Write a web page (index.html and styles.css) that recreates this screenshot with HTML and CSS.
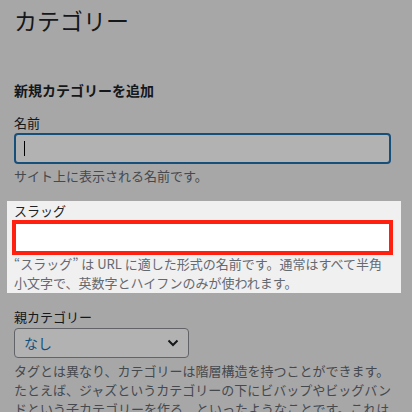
FILE: index.html
```html
<!DOCTYPE html>
<html lang="ja">
<head>
  <meta charset="UTF-8" />
  <meta name="viewport" content="width=device-width, initial-scale=1.0"/>
  <title>カテゴリー</title>
  <link rel="stylesheet" href="styles.css">
</head>
<body>
  <div class="wrap">
    <h1>カテゴリー</h1>

    <h2>新規カテゴリーを追加</h2>

    <div class="form-field">
      <label>名前</label>
      <div class="text-input is-focused"><span class="caret"></span></div>
      <p class="description">サイト上に表示される名前です。</p>
    </div>

    <div class="form-field is-highlighted">
      <label>スラッグ</label>
      <div class="text-input is-marked"></div>
      <p class="description">“スラッグ” は URL に適した形式の名前です。通常はすべて半角小文字で、英数字とハイフンのみが使われます。</p>
    </div>

    <div class="form-field">
      <label>親カテゴリー</label>
      <div class="select">
        <span>なし</span>
        <svg width="12" height="8" viewBox="0 0 12 8"><path d="M1.5 1.5 L6 6 L10.5 1.5" fill="none" stroke="#1d2327" stroke-width="2"/></svg>
      </div>
      <p class="description">タグとは異なり、カテゴリーは階層構造を持つことができます。たとえば、ジャズというカテゴリーの下にビバップやビッグバンドという子カテゴリーを作る、といったようなことです。これは完全に任意です。</p>
    </div>
  </div>

  <div class="overlay"></div>
</body>
</html>
```

FILE: styles.css
```css
:root {
  --bg: #f0f0f1;
  --text: #1d2327;
  --muted: #646970;
  --blue: #2271b1;
  --border: #8c8f94;
  --mark: #ff2010;
}

body {
  margin: 0;
  background-color: var(--bg);
  color: var(--text);
  font-family: "Noto Sans CJK JP", "Noto Sans", sans-serif;
  font-size: 13px;
  overflow: hidden;
}

.wrap {
  padding: 0 21px 0 14px;
}

h1 {
  margin: 0;
  padding-top: 5px;
  font-size: 23px;
  font-weight: 400;
  line-height: 30px;
}

h2 {
  margin: 45px 0 0;
  font-size: 14px;
  font-weight: 700;
  line-height: 20px;
}

.form-field {
  margin-top: 13px;
}

.form-field label {
  display: block;
  line-height: 20px;
}

.text-input {
  box-sizing: border-box;
  height: 31px;
  background: #fff;
  border: 1px solid var(--border);
  border-radius: 4px;
}

.text-input.is-focused {
  border: 2px solid var(--blue);
  display: flex;
  align-items: center;
  padding-left: 8px;
}

.caret {
  width: 1px;
  height: 15px;
  background: #000;
}

.text-input.is-marked {
  margin-top: 1px;
  border-radius: 0;
  outline: 4px solid var(--mark);
  outline-offset: -2px;
}

.description {
  margin: 2px 0 0;
  color: var(--muted);
  line-height: 19px;
}

.is-highlighted {
  position: relative;
  z-index: 2;
  margin: 16px -10px 0 -7px;
  padding: 0 10px 1px 7px;
  background: var(--bg);
}

.is-highlighted .description {
  margin-top: 1px;
}

.is-highlighted + .form-field {
  margin-top: 14px;
}

.select {
  box-sizing: border-box;
  width: 175px;
  height: 30px;
  margin-top: 1px;
  padding: 0 9px 0 9px;
  display: flex;
  align-items: center;
  justify-content: space-between;
  background: #fff;
  border: 1px solid var(--border);
  border-radius: 4px;
  color: var(--blue);
  font-size: 14px;
}

.select + .description {
  margin-top: 3px;
}

.overlay {
  position: fixed;
  inset: 0;
  z-index: 1;
  background: rgba(0, 0, 0, 0.3);
}
```
